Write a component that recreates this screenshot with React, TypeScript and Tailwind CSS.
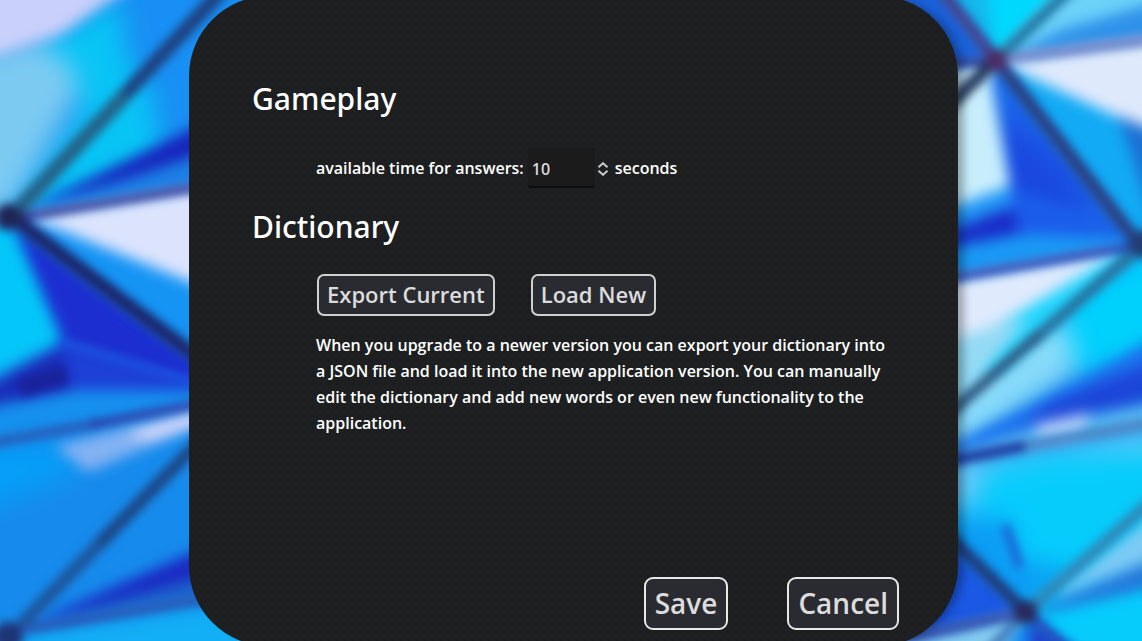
import { useState } from "react";

type Facet = [points: string, fill: string];
type Seam = [x1: number, y1: number, x2: number, y2: number, width: number, color: string];

const glows: Facet[] = [
  // left side
  ["-40,60 62,30 80,90 10,215 -40,215", "#7ccaf2"],
  ["40,45 135,-10 150,20 150,70 180,110 150,190 20,212 85,110 72,65", "#08c4f5"],
  ["112,-40 300,-40 300,150 160,150 152,95 128,60", "#188ff4"],
  ["-40,440 300,400 300,700 -40,700", "#168bed"],
  ["-40,450 60,445 82,470 -40,520", "#059ff8"],
  ["-20,720 15,634 189,606 300,590 300,720", "#12aff6"],
  // right side
  ["996,60 1180,200 1180,300 1000,210 980,70", "#1b66ea"],
  ["1000,110 1060,160 1100,215 1000,200", "#1a48e0"],
  ["900,345 1000,322 1070,318 1082,368 950,460 900,460", "#88daf9"],
  ["1060,300 1145,244 1200,248 1200,350 1080,375", "#00d0fc"],
  ["900,470 1200,418 1200,720 900,720", "#06ccfc"],
  ["900,470 1200,422 1200,448 1050,455 985,470 972,510 900,505", "#6cc8f8"],
  ["900,508 1012,520 1016,560 1080,570 1026,612 900,560", "#0c9cf4"],
];

const facets: Facet[] = [
  // left side
  ["-30,-30 175,-45 62,34 -30,66", "#c9d0fa"],
  ["30,207 189,130 260,95 260,140 189,161", "#1724bc"],
  ["20,214 189,158 260,140 260,180 189,188", "#1c7fe6"],
  ["20,218 260,178 260,312 60,232", "#dce4fd"],
  ["15,216 60,230 260,310 260,420 189,352", "#1594f4"],
  ["10,222 189,356 260,400 189,392 60,345", "#1c2ed0"],
  ["-30,225 14,228 62,340 -30,385", "#04c6f8"],
  ["-30,395 70,340 80,390 -30,412", "#1a2cb8"],
  ["60,340 260,400 260,392 72,393", "#1d40d6"],
  ["-30,410 75,390 260,391 260,395 -30,445", "#1690ee"],
  ["55,446 260,392 260,402 189,430 88,472", "#84b2f2"],
  ["125,434 260,392 260,400 189,428 150,440", "#e2defa"],
  ["25,626 189,554 260,524 260,560 189,582", "#1a28c2"],
  ["25,626 189,580 260,560 260,600 189,600", "#1c62cc"],
  // right side
  ["870,-30 935,-30 996,60 940,72", "#1a62dc"],
  ["930,-30 992,-30 996,60", "#14b8ec"],
  ["985,-30 1090,-30 996,60", "#00d8fe"],
  ["1078,-30 1180,-30 1180,38 996,60", "#6cd2f8"],
  ["1180,-5 1180,38 1010,56 1060,30", "#2f92ea"],
  ["996,62 1180,36 1180,145 1118,120 1012,74", "#dfe9fc"],
  ["1000,64 1120,118 1180,150 1180,300", "#12aaf4"],
  ["1118,116 1180,140 1160,240", "#1c70d4"],
  ["996,60 930,72 930,215 1010,188 990,75", "#c8eefc"],
  ["930,215 1010,186 1012,214 930,240", "#2096f4"],
  ["930,238 1010,207 1027,232 930,252", "#1a2cc8"],
  ["1010,190 1140,240 1020,238", "#1c5cea"],
  ["930,250 1030,234 1130,238 1125,248 930,282", "#1a98f4"],
  ["930,283 1125,250 1000,324 930,350", "#e0eafd"],
  ["1125,250 1142,250 1000,372 960,380 1000,324", "#20d4fc"],
  ["930,345 975,332 1030,318 958,402 930,424", "#94daf4"],
  ["930,455 1085,378 1180,322 1180,395 930,463", "#1c72ee"],
  ["1050,402 1180,352 1180,394 1020,426", "#1c46d8"],
  ["960,452 1040,426 1180,398 1180,420 958,460", "#58b8f2"],
  ["1035,424 1090,412 1080,434 1040,440", "#b4d0fa"],
  ["930,525 1026,612 910,640 890,640", "#1b58e4"],
  ["1055,590 1180,495 1180,550 1060,595", "#7ccaf5"],
  ["1040,608 1180,548 1180,582 1040,614", "#2478da"],
  ["890,645 1020,614 985,700 890,700", "#84cbef"],
  ["1022,618 985,680 1060,680", "#1590f4"],
  ["1028,616 1030,680 1090,660", "#2040cc"],
];

const seams: Seam[] = [
  [120, 100, 230, -18, 14, "#1f3f7c"],
  [8, 220, 125, 95, 15, "#256186"],
  [10, 219, 260, 177, 7, "#3a2f88"],
  [8, 214, 260, 405, 14, "#1c2466"],
  [62, 342, 260, 402, 5, "#1c60e8"],
  [20, 388, 66, 374, 18, "#1a229a"],
  [-20, 445, 100, 423, 9, "#2a58b4"],
  [90, 425, 260, 392, 7, "#30309a"],
  [10, 636, 110, 533, 13, "#1d549a"],
  [100, 543, 260, 380, 12, "#1d427e"],
  [20, 630, 260, 590, 9, "#2b55b2"],
  [925, -30, 996, 60, 11, "#4a3f88"],
  [996, 60, 1140, 246, 13, "#2b3f80"],
  [996, 60, 1082, -22, 12, "#2478a4"],
  [996, 60, 940, 114, 13, "#23385c"],
  [996, 60, 930, 66, 7, "#1b2a80"],
  [996, 60, 1180, 36, 9, "#7480c4"],
  [930, 282, 1135, 246, 7, "#2b34a4"],
  [1142, 246, 1030, 343, 12, "#286f9c"],
  [1040, 334, 930, 430, 11, "#2c5680"],
  [930, 465, 1030, 445, 10, "#1b3098"],
  [1025, 446, 1180, 418, 11, "#4c86c6"],
  [1005, 525, 1020, 568, 9, "#1c62d4"],
  [930, 518, 1026, 612, 12, "#203874"],
  [1026, 612, 1180, 476, 12, "#2f86b6"],
  [1026, 612, 1100, 680, 9, "#244ab8"],
  [1026, 612, 975, 665, 9, "#3c74b4"],
  [1026, 612, 890, 642, 8, "#34489c"],
];

const knots: [number, number, number, string][] = [
  [8, 217, 13, "#1f2454"],
  [8, 637, 15, "#1e3474"],
  [996, 60, 11, "#4a2c66"],
  [1144, 244, 14, "#223c74"],
  [1026, 612, 12, "#28285e"],
];

function Backdrop() {
  return (
    <svg
      aria-hidden="true"
      className="absolute inset-0 h-full w-full"
      viewBox="0 0 1142 641"
      preserveAspectRatio="xMidYMid slice"
    >
      <defs>
        <filter id="glow" filterUnits="userSpaceOnUse" x="-60" y="-60" width="1262" height="761" colorInterpolationFilters="sRGB">
          <feGaussianBlur stdDeviation="13" />
        </filter>
        <filter id="soften" filterUnits="userSpaceOnUse" x="-40" y="-40" width="1222" height="721" colorInterpolationFilters="sRGB">
          <feGaussianBlur stdDeviation="7" />
        </filter>
        <filter id="soften-seams" filterUnits="userSpaceOnUse" x="-40" y="-40" width="1222" height="721" colorInterpolationFilters="sRGB">
          <feGaussianBlur stdDeviation="5" />
        </filter>
      </defs>
      <rect x="-40" y="-40" width="1222" height="721" fill="#168fee" />
      <g filter="url(#glow)">
        {glows.map(([points, fill]) => (
          <polygon key={points} points={points} fill={fill} />
        ))}
      </g>
      <g filter="url(#soften)">
        {facets.map(([points, fill]) => (
          <polygon key={points} points={points} fill={fill} />
        ))}
      </g>
      <g filter="url(#soften-seams)">
        {seams.map(([x1, y1, x2, y2, width, color]) => (
          <line key={`${x1},${y1},${x2},${y2}`} x1={x1} y1={y1} x2={x2} y2={y2} stroke={color} strokeWidth={width} />
        ))}
        {knots.map(([cx, cy, r, fill]) => (
          <circle key={`${cx},${cy}`} cx={cx} cy={cy} r={r} fill={fill} />
        ))}
      </g>
    </svg>
  );
}

const smallButton =
  "h-[42px] rounded-[7px] border-2 border-[#d0d0d0] bg-[#292b30] px-2 pb-0.5 text-[22px] leading-none font-semibold text-[#dcdcdc]";
const largeButton =
  "h-[53px] rounded-[9px] border-2 border-[#e8e8e8] bg-[#292b30] px-[9px] pb-0.5 text-[28px] leading-none font-semibold text-[#dcdcdc]";
const heading = "font-['Noto_Sans','Open_Sans',sans-serif] text-[30px] leading-[46px] font-medium";

export default function App() {
  const [seconds, setSeconds] = useState("10");
  const step = (by: number) => setSeconds(String(Math.max(1, Number(seconds) + by)));

  return (
    <div className="relative flex h-screen justify-center overflow-hidden bg-[#168fee] font-['Open_Sans','Noto_Sans',sans-serif] text-white">
      <Backdrop />
      <main className="relative -mt-1 -mb-[5px] ml-[5px] flex w-[769px] max-w-full shrink-0 flex-col rounded-[80px] bg-[#1d1f21] bg-[radial-gradient(#191b1d_1px,transparent_1px)] bg-size-[8px_8px] pt-20 pr-[59px] pb-4 pl-[63px] shadow-[8px_0_8px_-2px_rgba(0,0,0,0.3)]">
        <section>
          <h1 className={heading}>Gameplay</h1>
          <div className="mt-[26px] ml-16 flex h-10 items-center text-base font-semibold">
            <label htmlFor="answer-time">available time for answers:</label>
            <input
              id="answer-time"
              inputMode="numeric"
              value={seconds}
              onChange={(e) => setSeconds(e.target.value)}
              className="ml-1 h-10 w-[67px] rounded-[3px] border-b-2 border-[#0c0d0e] bg-[#1b1b1b] px-1 pt-1 font-['Noto_Sans','Open_Sans',sans-serif] font-medium text-[#e0e0e0] outline-none"
            />
            <div className="mx-0.5 flex w-3 flex-col items-center gap-0.5 pt-0.5">
              <button type="button" aria-label="Increase" onClick={() => step(1)} className="h-1.5 w-3">
                <svg viewBox="0 0 12 6" className="block h-1.5 w-3" fill="none" stroke="#c8c8c8" strokeWidth="2">
                  <path d="M1.5 5.2 L6 1.2 L10.5 5.2" />
                </svg>
              </button>
              <button type="button" aria-label="Decrease" onClick={() => step(-1)} className="h-1.5 w-3">
                <svg viewBox="0 0 12 6" className="block h-1.5 w-3" fill="none" stroke="#c8c8c8" strokeWidth="2">
                  <path d="M1.5 0.8 L6 4.8 L10.5 0.8" />
                </svg>
              </button>
            </div>
            <span className="ml-1">seconds</span>
          </div>
        </section>
        <section className="mt-4">
          <h1 className={heading}>Dictionary</h1>
          <div className="mt-6 ml-[65px] flex gap-9">
            <button type="button" className={smallButton}>
              Export Current
            </button>
            <button type="button" className={smallButton}>
              Load New
            </button>
          </div>
          <p className="mt-4 mr-2 ml-16 text-base leading-[26px] font-semibold">
            When you upgrade to a newer version you can export your dictionary into a JSON file and load it into the new
            application version. You can manually edit the dictionary and add new words or even new functionality to the
            application.
          </p>
        </section>
        <div className="mt-auto flex justify-end gap-[59px]">
          <button type="button" className={largeButton}>
            Save
          </button>
          <button type="button" className={largeButton}>
            Cancel
          </button>
        </div>
      </main>
    </div>
  );
}
